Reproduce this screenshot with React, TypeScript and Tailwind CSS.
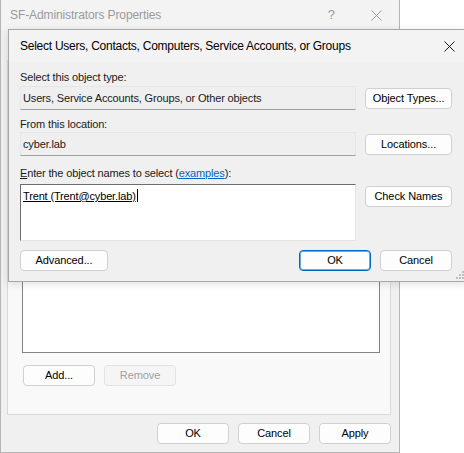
import React from "react";

const font = { fontFamily: '"Liberation Sans", Arial, sans-serif' };

function Btn({
  children,
  w = "w-[72px]",
  primary = false,
  disabled = false,
}: {
  children: React.ReactNode;
  w?: string;
  primary?: boolean;
  disabled?: boolean;
}) {
  const base =
    "flex h-[21px] items-center justify-center rounded-[4px] border text-[11px] tracking-[-0.1px] leading-none";
  if (disabled)
    return <div className={`${base} ${w} border-[#e3e3e3] bg-[#f5f5f5] text-[#a0a0a0]`}>{children}</div>;
  if (primary)
    return (
      <div className={`${base} ${w} border-[#0067c0] bg-[#fdfdfd] text-black shadow-[inset_0_0_0_1px_rgba(0,103,192,0.55)]`}>
        {children}
      </div>
    );
  return <div className={`${base} ${w} border-[#d0d0d0] bg-[#fdfdfd] text-black`}>{children}</div>;
}

function CloseIcon({ color = "#1a1a1a" }: { color?: string }) {
  return (
    <svg width="11" height="11" viewBox="0 0 11 11">
      <path d="M0.5 0.5 L10.5 10.5 M10.5 0.5 L0.5 10.5" stroke={color} strokeWidth="1" />
    </svg>
  );
}

function Grip() {
  return (
    <svg width="8" height="8" viewBox="0 0 8 8">
      {[
        [6, 0],
        [3, 3],
        [6, 3],
        [0, 6],
        [3, 6],
        [6, 6],
      ].map(([x, y]) => (
        <rect key={`${x}-${y}`} x={x} y={y} width="2" height="2" fill="#bdbdbd" />
      ))}
    </svg>
  );
}

function ReadonlyField({ text }: { text: string }) {
  return (
    <div className="flex h-[24px] w-[337px] items-center border border-[#e6e6e6] border-b-[#a0a0a0] bg-[#efefef] pl-[2px] text-[#1a1a1a]">
      {text}
    </div>
  );
}

export default function App() {
  return (
    <div className="relative h-[453px] w-[464px] overflow-hidden bg-white" style={font}>
      {/* back window */}
      <div className="absolute left-0 top-0 flex h-[453px] w-[400px] flex-col border-x border-b border-[#b5b5b5] bg-[#f0f0f0]">
        <div className="flex h-[30px] items-center justify-between bg-[#f3f3f3] pl-[9px] pr-[17px]">
          <span className="text-[12px] tracking-[-0.1px] text-[#9a9a9a]">SF-Administrators Properties</span>
          <div className="flex items-center gap-[36px]">
            <span className="text-[13px] text-[#9a9a9a]">?</span>
            <CloseIcon color="#9a9a9a" />
          </div>
        </div>
        <div className="ml-[6px] mr-[8px] mt-[30px] flex h-[355px] flex-col justify-end border border-[#d9d9d9] bg-[#f9f9f9] px-[14px] pb-[28px]">
          <div className="h-[200px] w-[358px] border border-[#838383] bg-white" />
          <div className="mt-[12px] flex gap-[9px] pl-[1px]">
            <Btn>Add...</Btn>
            <Btn disabled>Remove</Btn>
          </div>
        </div>
        <div className="mr-[8px] mt-[8px] flex justify-end gap-[9px]">
          <Btn>OK</Btn>
          <Btn>Cancel</Btn>
          <Btn>Apply</Btn>
        </div>
      </div>

      {/* front dialog */}
      <div className="absolute left-[8px] top-[29px] flex h-[253px] w-[460px] flex-col border border-[#a8a8a8] bg-[#f0f0f0] shadow-[0_2px_8px_rgba(0,0,0,0.12)]">
        <div className="flex h-[32px] items-center justify-between bg-[#f3f3f3] pl-[11px] pr-[12px]">
          <span className="text-[12px] tracking-[-0.25px] text-black">
            Select Users, Contacts, Computers, Service Accounts, or Groups
          </span>
          <CloseIcon />
        </div>
        <div className="flex flex-col pl-[11px] pr-[15px] pt-[8px] text-[11px] tracking-[-0.15px] text-[#1a1a1a]">
          <div className="h-[14px] leading-[14px]">Select this object type:</div>
          <div className="mt-[2px] flex items-center gap-[9px]">
            <ReadonlyField text="Users, Service Accounts, Groups, or Other objects" />
            <Btn w="w-[87px]">Object Types...</Btn>
          </div>
          <div className="mt-[7px] h-[14px] leading-[14px]">From this location:</div>
          <div className="mt-[1px] flex items-center gap-[9px]">
            <ReadonlyField text="cyber.lab" />
            <Btn w="w-[87px]">Locations...</Btn>
          </div>
          <div className="mt-[10px] h-[14px] leading-[14px]">
            <span className="underline">E</span>nter the object names to select (
            <span className="text-[#0066cc] underline">examples</span>):
          </div>
          <div className="mt-[4px] flex items-start gap-[9px]">
            <div className="h-[57px] w-[338px] border border-[#e3e3e3] border-l-[#6d6d6d] border-t-[#6d6d6d] bg-white pl-[2px] pt-[2px]">
              <span className="leading-[14px] text-black underline">Trent (Trent@cyber.lab)</span>
              <span className="ml-[1px] inline-block h-[13px] w-[1px] translate-y-[2px] bg-black" />
            </div>
            <div className="mt-[2px]">
              <Btn w="w-[87px]">Check Names</Btn>
            </div>
          </div>
          <div className="mt-[9px] flex items-center">
            <Btn w="w-[88px]">Advanced...</Btn>
            <div className="ml-auto flex gap-[9px]">
              <Btn primary>OK</Btn>
              <Btn>Cancel</Btn>
            </div>
          </div>
        </div>
        <div className="absolute bottom-[2px] left-[447px]">
          <Grip />
        </div>
      </div>
    </div>
  );
}
